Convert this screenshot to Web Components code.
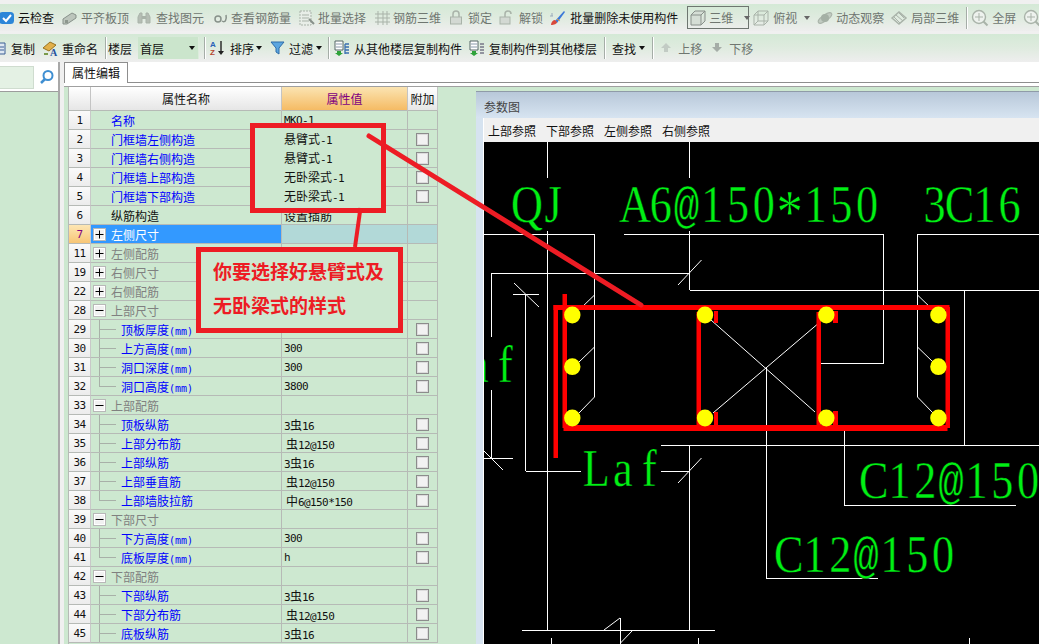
<!DOCTYPE html>
<html lang="zh"><head><meta charset="utf-8"><title>属性编辑</title>
<style>html,body{margin:0;padding:0;width:1039px;height:644px;overflow:hidden;background:#f0f0f0}</style></head>
<body>
<gl-app></gl-app>
<script>
const CJK='"Noto Sans CJK SC","Noto Sans CJK JP",sans-serif';
const mix=t=>String(t).replace(/[\u4e00-\u9fff]+/g,m=>`<span class="c">${m}</span>`);
const G='#a9b3a9',GD='#87918a';
const ICONS={
cloud:`<rect x="-1" y="2" width="15" height="12" rx="3.500" fill="#2c86d8"/><path d="M3 8l3 3 5-6" fill="none" stroke="#fff" stroke-width="2"/>`,
slab:`<path d="M1 9l9-6 4 2v3l-9 6H1z" fill="#bcc5bc" stroke="${GD}"/><path d="M3 10h3v3H3z" fill="#8d978e"/>`,
bino:`<path d="M1 13V7l2-4h2v10zM9 13V3h2l2 4v6z" fill="#b5bdb4" stroke="${G}"/><path d="M5 6h4v3H5z" fill="${G}"/>`,
rebar:`<circle cx="5" cy="9" r="3" fill="none" stroke="${GD}" stroke-width="1.5"/><path d="M9 11c3 2 5-1 4-6" fill="none" stroke="${GD}" stroke-width="1.5"/>`,
batch:`<path d="M1 1h11v14H1z" fill="#e8eee8" stroke="${G}" stroke-dasharray="2 1"/><path d="M3 5h7M3 8h7M3 11h7" stroke="${G}"/><path d="M10 9l5 5" stroke="${GD}" stroke-width="2"/>`,
grid3:`<path d="M1 4h15M1 8h15M1 12h15M4 1v14M9 1v14M13 1v14" stroke="${G}" fill="none"/>`,
lock:`<path d="M4 7V4a3 3 0 016 0v3" fill="none" stroke="${G}" stroke-width="1.5"/><rect x="1.500" y="7" width="11" height="7" fill="#d3d9d3" stroke="${G}"/>`,
unlock:`<path d="M6 7V4a3 3 0 016 0" fill="none" stroke="${G}" stroke-width="1.5"/><rect x="1" y="7" width="10" height="7" fill="#d3d9d3" stroke="${G}"/>`,
brush:`<path d="M5 11L14 1l1 1-8 11z" fill="#3b78d8"/><path d="M7 9l3 2" stroke="#e8a040"/><path d="M1 15c0-3 2-5 4-5l2 2c0 2-3 3-6 3z" fill="#d9483b"/><path d="M0 6h3M2 3v3" stroke="#9ab" />`,
cube:`<path d="M1 5h10v10H1zM1 5l4-4h10l-4 4M11 15l4-4V1" fill="#d5ded5" stroke="#88908a"/>`,
wire:`<path d="M1 5h10v10H1zM1 5l4-4h10l-4 4M11 15l4-4V1M5 1v10H15M5 11l-4 4" fill="none" stroke="${G}"/>`,
orbit:`<ellipse cx="8" cy="8" rx="8" ry="3" transform="rotate(-35 8 8)" fill="#c2ccc2" stroke="${G}"/><circle cx="8" cy="8" r="4" fill="#a4b0a5"/>`,
part:`<path d="M1 8l7-6 7 6-7 6z" fill="none" stroke="${G}" stroke-width="1.5"/><path d="M5 5l7 6M8 3l5 5M3 7l6 6" stroke="${G}"/>`,
zoom:`<circle cx="7" cy="7" r="6.500" fill="#eef2ee" stroke="${G}" stroke-width="1.4"/><path d="M7 3v8M3 7h8" stroke="${G}"/><path d="M11.500 11.500l4 4" stroke="${G}" stroke-width="2"/>`,
copy:`<path d="M-3 3h8v11h-8z" fill="#dfe8f2" stroke="#3a5f95"/><path d="M-2 7h6M-2 10h6" stroke="#3a5f95"/>`,
rename:`<path d="M1 8l7-6 6 3-7 6z" fill="#e2b04a" stroke="#96711f"/><path d="M2 13h4v2H2z" fill="#7a9a4a"/><text x="8" y="15.500" font-family="Liberation Serif" font-weight="700" font-size="10" fill="#2352a0">A</text>`,
sort:`<text x="0" y="7" font-family="Liberation Sans" font-weight="700" font-size="8" fill="#2a62b8">A</text><text x="0" y="15" font-family="Liberation Sans" font-weight="700" font-size="8" fill="#b4442f">Z</text><path d="M11 1v12" stroke="#222" stroke-width="1.4"/><path d="M8 11l3 4 3-4z" fill="#222"/>`,
funnel:`<path d="M1 2h13l-5 6v6l-3-2V8z" fill="#5ba6e0" stroke="#2e6ca8"/>`,
dup:`<path d="M1 1h8v9H1z" fill="#fff" stroke="#566"/><path d="M2 4h6M2 7h6" stroke="#89a"/><path d="M3 11h4v2h2l-4 3-4-3h2z" fill="#2fa33a"/><path d="M11 4h4M11 7h4M11 10h4M11 13h4M11 4v10" stroke="#3a6fb0" stroke-width="1.3"/>`,
dup2:`<path d="M1 1h8v9H1z" fill="#fff" stroke="#566"/><path d="M2 4h6M2 7h6" stroke="#89a"/><path d="M3 11h4v2h2l-4 3-4-3h2z" fill="#2fa33a"/><path d="M11 4h4M11 7h4M11 10h4M11 13h4" stroke="#778" stroke-width="1.3"/>`,
up:`<path d="M5 3l5 5H7v4H3V8H0z" fill="#c2cbc4"/>`,
down:`<path d="M3 3h4v4h3l-5 5-5-5h3z" fill="#a5ada7"/>`,
search:`<circle cx="8" cy="6.500" r="4.500" fill="#fff" stroke="#3f8fd2" stroke-width="2"/><path d="M5 10l-4 4" stroke="#3f8fd2" stroke-width="2.500"/>`
};

class GlTool extends HTMLElement{
 connectedCallback(){
  const a=n=>this.getAttribute(n);
  const ml=a('ml')||0,iw=a('iw')||16,ig=a('ig')||4;
  const dis=this.hasAttribute('off');
  const icon=a('icon')?`<svg width="${iw}" height="16" viewBox="0 0 ${iw} 16" overflow="visible" aria-hidden="true">${ICONS[a('icon')]}</svg>`:'';
  this.attachShadow({mode:'open'}).innerHTML=`<style>
  :host{display:flex;align-items:center;height:100%;margin-left:${ml}px;flex:none;font:12px ${CJK};color:${dis?'#6f7670':'#111'};white-space:nowrap}
  svg{flex:none;margin-right:${ig}px}
  :host([box]){border:1px solid #6e7670;height:23px;box-sizing:border-box;align-self:center}
  i{display:block;width:0;height:0;border:3px solid transparent;border-top:4px solid ${dis?'#666':'#111'};border-bottom:0;margin-left:${a('am')||5}px}
  </style>${icon}<span>${a('label')||''}</span>${this.hasAttribute('arrow')?'<i></i>':''}`;
 }
}
class GlSep extends HTMLElement{
 connectedCallback(){
  this.attachShadow({mode:'open'}).innerHTML=`<style>:host{display:block;flex:none;width:1px;height:22px;background:#a5ada7;align-self:center;margin-left:${this.getAttribute('ml')||0}px;box-shadow:1px 0 0 #fff}</style>`;
 }
}
class GlToolbar extends HTMLElement{
 connectedCallback(){
  this.attachShadow({mode:'open'}).innerHTML=`<style>:host{display:flex;align-items:center;flex:none;height:${this.getAttribute('h')}px;margin-top:${this.getAttribute('mt')}px;background:linear-gradient(#d4e9d6,#dfebdf 50%,#eeeeee);overflow:hidden}</style><slot></slot>`;
 }
}
class GlSelect extends HTMLElement{
 connectedCallback(){
  this.attachShadow({mode:'open'}).innerHTML=`<style>:host{display:flex;align-items:center;flex:none;box-sizing:border-box;width:61px;height:22px;margin-left:${this.getAttribute('ml')}px;background:#cbe5cc;border-right:1px solid #dcecdc;padding-left:2px;font:12px ${CJK};color:#111}
  span{flex:1}i{display:block;border:3px solid transparent;border-top:4px solid #111;border-bottom:0;margin-right:3px}</style><span><slot></slot></span><i></i>`;
 }
}
class GlSide extends HTMLElement{
 connectedCallback(){
  this.attachShadow({mode:'open'}).innerHTML=`<style>
  :host{display:flex;flex-direction:column;flex:none;width:60px;border-right:2px solid #a8a8a8;box-sizing:border-box;background:#fff}
  .top{display:flex;align-items:center;height:30px;box-sizing:border-box;border-bottom:1px solid #9c9c9c;padding-top:1px}
  .inp{width:34px;height:23px;box-sizing:border-box;background:#e4f1e4;border:1px solid #cfdccf;border-left:0}
  svg{margin-left:6px}.rest{flex:1;background:#cde8d0}
  </style><div class="top"><div class="inp"></div><svg width="14" height="16" viewBox="0 0 14 16" aria-hidden="true">${ICONS.search}</svg></div><div class="rest"></div>`;
 }
}
class PropRow extends HTMLElement{
 connectedCallback(){
  const a=n=>this.getAttribute(n)||'';
  const k=a('kind')||'link',tog=a('toggle'),tree=a('tree'),sel=this.hasAttribute('sel');
  const col={link:'#0000ff',black:'#111',group:'#808080'}[k];
  const val=a('value');
  const sign=tog?`<svg class="tog" width="13" height="13" viewBox="0 0 13 13" aria-hidden="true"><rect x=".5" y=".5" width="12" height="12" fill="#f1f1f1" stroke="#b8b8b8"/><rect x="1.500" y="1.500" width="10" height="10" fill="none" stroke="#fff"/><path d="M2.500 6.500h8${tog==='+'?'M6.500 2.500v8':''}" stroke="#000" fill="none"/></svg>`:'';
  this.attachShadow({mode:'open'}).innerHTML=`<style>
  :host{display:grid;grid-template-columns:22px 191px 126px 30px;height:19px;font:10px "DejaVu Sans Mono",${CJK};color:#111}
  .c{font:12px ${CJK}}
  div{box-sizing:border-box;border-right:1px solid #b6bab6;border-bottom:1px solid #b6bab6;display:flex;align-items:center;position:relative;white-space:nowrap;overflow:hidden}
  .n{justify-content:center;background:linear-gradient(#fafafa,#ececec);border-right-color:#c8c8c8;font-size:11px;letter-spacing:-.6px}
  .name{color:${sel?'#fff':col};background:${sel?'#3399ff':'transparent'};padding-left:${tree?30:20}px}
  .val{padding-left:${val[0]===' '?4:2}px;background:${sel?'#b2d9d8':'transparent'};font-size:11px;letter-spacing:-.6px}
  .val .c{letter-spacing:0}
  .ex{justify-content:center;background:${sel?'#b2d9d8':'transparent'}}
  .tog{position:absolute;left:2px;top:3px}
  .t{position:absolute;left:8px;top:0;width:1px;background:#a8b0a8;height:${tree==='end'?'10px':'19px'}}
  .h{position:absolute;left:8px;top:9px;width:17px;height:1px;background:#a8b0a8}
  .box{width:13px;height:13px;box-sizing:border-box;border:1px solid #8c8c8c;background:#f2f2f2;box-shadow:inset 0 0 0 1px #dcdcdc;display:block;flex:none}
  ${sel?'.n{background:linear-gradient(#fde6b4,#f8c676);color:#800080}':''}
  </style><div class="n">${a('n')}</div><div class="name">${tree?'<span class="t"></span><span class="h"></span>':''}${sign}<span>${mix(a('label'))}</span></div><div class="val"><span>${mix(val.trim())}</span></div><div class="ex">${this.hasAttribute('check')?'<span class="box"></span>':''}</div>`;
 }
}
class PropTable extends HTMLElement{
 connectedCallback(){
  this.attachShadow({mode:'open'}).innerHTML=`<style>
  :host{display:block;flex:none;width:369px;border-left:1px solid #b6bab6;margin-left:4px;box-sizing:content-box}
  .head{display:grid;grid-template-columns:22px 191px 126px 30px;height:24px;font:12px ${CJK};color:#111}
  .head div{display:flex;align-items:center;justify-content:center;box-sizing:border-box;border-right:1px solid #c4c4c4;border-bottom:1px solid #b6bab6;background:linear-gradient(#fff,#e6e6e6)}
  .head .v{background:linear-gradient(#fbe4b2,#f5bb64);color:#800080}
  </style><div class="head"><div></div><div>属性名称</div><div class="v">属性值</div><div>附加</div></div><slot></slot>`;
 }
}
class RefWindow extends HTMLElement{
 connectedCallback(){
  this.attachShadow({mode:'open'}).innerHTML=`<style>
  :host{display:flex;flex-direction:column;flex:none;width:563px;margin-top:4px;background:#d6e3f0;box-sizing:border-box;padding-left:0;font:12px ${CJK}}
  .title{height:27px;flex:none;box-sizing:border-box;padding:6px 0 0 8px;color:#444;background:linear-gradient(#b8c8d9,#d7e4f1);border-top:1px solid #8f9ba8;line-height:18px}
  .body{flex:1;display:flex;flex-direction:column;margin-left:7px;border-left:1px solid #fff;min-height:0}
  .menu{height:24px;flex:none;background:#f0f0f0;display:flex;align-items:center;gap:10px;padding-left:4px;color:#111}
  .cv{flex:1;min-height:0;background:#000}
  </style><div class="title">参数图</div><div class="body"><div class="menu"><span>上部参照</span><span>下部参照</span><span>左侧参照</span><span>右侧参照</span></div><div class="cv"><slot></slot></div></div>`;
 }
}
class CadDrawing extends HTMLElement{
 connectedCallback(){
  const W=[
  [547.5,142,547.5,178],[547.5,231,547.5,630],[689.5,142,689.5,178],[689.5,231,689.5,290],[689.5,290,1039,290],[689.5,445,689.5,630],
  [484,234,594.5,234],[594.5,234,594.5,397],[624,234,883.5,234],[883.5,234,883.5,363],[818,363,883.5,363],[917.5,234,1039,234],[917.5,234,917.5,397],
  [491.5,273,689.5,273],[491.5,273,491.5,337],[491.5,390,491.5,458],[484,458,513,458],[525.5,295,525.5,471],[525.5,471,580.5,471],[513,294.500,539,294.500],
  [661,471,689.500,471],[661,445.500,1039,445.500],[964.500,290,964.500,445],[766.500,367,766.500,578.500],[766.500,578.500,878,578.500],[844.500,428,844.500,505.500],[844.500,505.500,1016,505.500],
  [521.500,630.500,715,630.500],[620.500,618,620.500,644],[551.500,638,551.500,644],[698.500,638,698.500,644],[969.500,638,969.500,644]];
  const D=[[594.5,295,579,310],[594.5,347,579,362],[594.5,397,579,413],[917.5,295,933,310],[917.5,347,933,362],[917.5,397,933,413],
  [678,285,701.5,260],[484,451,503,470],[514,283,539,307],[678,483,701.5,458],[711,320,815,412],[820,322,713,413],[604,630,620,618],[633,630,620.5,643]];
  const R=[[553.5,305,396,5],[553.5,305,4.5,153],[562.5,294,4.5,134],[563.5,425,384,6],[945.5,307,4.5,121],[696.5,312,4.5,114],[816.500,312,4.5,114],[714,311,4,12],[714,412,4,15],[833,311,5,12],[833,411,5,16]];
  const C=[[572.3,315],[705,315],[826.3,315],[938.4,315],[572.3,366.7],[938.4,366.7],[572.3,418],[705,418],[826.3,418],[938.4,418]];
  const T=[['QJ',514,222,26],['A6@150*150',622,222,25.8],['3C16',922,222,25],['Laf',439,382,26.5],['Laf',583,486,26.5],['C12@150',861,498,25.7],['C12@150',776,572,25.7]];
  const SX=.85,FS=52;
  const ADV={Q:.722,J:.389,A:.722,C:.667,L:.611,a:.444,f:.333};
  const ln=a=>a.map(l=>`<line x1="${l[0]}" y1="${l[1]}" x2="${l[2]}" y2="${l[3]}"/>`).join('');
  const txt=t=>{
   const chars=[...t[0]];
   let html='',run=[],runx=[],back=0;
   const flush=()=>{if(run.length){html+=`<tspan x="${runx.join(' ')}"${back?` dy="${back}"`:''}>${run.join('')}</tspan>`;back=0;run=[];runx=[];}};
   chars.forEach((c,i)=>{
    const cell=t[1]+i*t[3];
    if(c==='@'){flush();const w=.6*50*SX;html+=`<tspan x="${((cell+(t[3]-w)/2)/SX).toFixed(1)}" font-family="Liberation Mono,monospace" font-size="50">@</tspan>`;}
    else if(c==='*'){flush();const w=.5*62*SX;html+=`<tspan x="${((cell+(t[3]-w)/2)/SX).toFixed(1)}" dy="10" font-size="62">*</tspan>`;back=-10;}
    else{const w=(ADV[c]||.5)*FS*SX;run.push(c);runx.push(((cell+(t[3]-w)/2)/SX).toFixed(1));}
   });
   flush();
   return `<text transform="scale(${SX} 1)" y="${t[2]}">${html}</text>`;
  };
  this.attachShadow({mode:'open'}).innerHTML=`<style>:host{display:block;width:555px;height:502px;overflow:hidden}svg{display:block}</style>
  <svg width="555" height="502" viewBox="484 142 555 502">
  <g stroke="#fff" stroke-width="1" shape-rendering="crispEdges">${ln(W)}</g>
  <g stroke="#fff" stroke-width="1">${ln(D)}</g>
  <g fill="#ff0000">${R.map(r=>`<rect x="${r[0]}" y="${r[1]}" width="${r[2]}" height="${r[3]}"/>`).join('')}</g>
  <g fill="#ffff00">${C.map(c=>`<ellipse cx="${c[0]}" cy="${c[1]}" rx="8.2" ry="8.4"/>`).join('')}</g>
  <g fill="#00f014" stroke="#000" stroke-width=".4" font-family="Liberation Serif,serif" font-size="52">${T.map(txt).join('')}</g>
  </svg>`;
 }
}
class NoteBox extends HTMLElement{
 connectedCallback(){
  const a=n=>this.getAttribute(n);
  this.attachShadow({mode:'open'}).innerHTML=`<style>
  :host{position:absolute;left:${a('x')}px;top:${a('y')}px;width:${a('w')}px;height:${a('h')}px;box-sizing:border-box;border:5px solid #ed1c24;background:#cde8d0;display:block}
  </style><slot></slot>`;
 }
}
class NoteLine extends HTMLElement{
 connectedCallback(){
  this.attachShadow({mode:'open'}).innerHTML=`<style>:host{position:absolute;left:0;top:0;width:1039px;height:644px;display:block;pointer-events:none}</style>
  <svg width="1039" height="644" aria-hidden="true"><g stroke="#ed1c24" fill="none"><path d="M369 136L641 305" stroke-width="5" stroke-linecap="round"/><path d="M360.500 208L355 247" stroke-width="4"/></g></svg>`;
 }
}
class NoteText extends HTMLElement{
 connectedCallback(){
  const k=this.getAttribute('kind');
  this.attachShadow({mode:'open'}).innerHTML=k==='big'
  ?`<style>:host{display:block;padding:2px 0 0 12px;font:700 19px/34px ${CJK};color:#ed1c24;white-space:nowrap}</style><slot></slot>`
  :`<style>:host{display:block;padding:1px 0 0 29px;font:11px/19px "DejaVu Sans Mono",${CJK};letter-spacing:-.6px;color:#111;white-space:nowrap}</style><slot></slot>`;
 }
}
class PropPanel extends HTMLElement{
 connectedCallback(){
  this.attachShadow({mode:'open'}).innerHTML=`<style>
  :host{display:flex;flex-direction:column;flex:1;min-width:0;background:#fff;font:12px ${CJK}}
  .strip{height:21px;flex:none;box-sizing:border-box;border-bottom:1px solid #8e8e8e;display:flex;background:#fff}
  .tab{width:64px;height:21px;box-sizing:border-box;border:1px solid #8e8e8e;border-bottom:0;background:#fff;padding-left:7px;line-height:19px;color:#111}
  .gap{height:3px;flex:none;border-bottom:1px solid #a0a0a0}
  .body{flex:1;min-height:0;display:flex;background:#cde8d0;justify-content:space-between;position:relative}
  </style><div class="strip"><div class="tab">属性编辑</div></div><div class="gap"></div><div class="body"><slot name="table"></slot><slot name="win"></slot></div>`;
 }
}
class GlApp extends HTMLElement{
 connectedCallback(){
  const rows=[
  {n:1,label:'名称',value:'MKQ-1'},
  {n:2,label:'门框墙左侧构造',check:1},{n:3,label:'门框墙右侧构造',check:1},{n:4,label:'门框墙上部构造',check:1},{n:5,label:'门框墙下部构造',check:1},
  {n:6,label:'纵筋构造',kind:'black',value:'设置插筋'},
  {n:7,label:'左侧尺寸',toggle:'+',sel:1},
  {n:11,label:'左侧配筋',toggle:'+',kind:'group'},{n:19,label:'右侧尺寸',toggle:'+',kind:'group'},{n:22,label:'右侧配筋',toggle:'+',kind:'group'},{n:28,label:'上部尺寸',toggle:'-',kind:'group'},
  {n:29,label:'顶板厚度(mm)',value:'h',check:1,tree:'mid'},{n:30,label:'上方高度(mm)',value:'300',check:1,tree:'mid'},{n:31,label:'洞口深度(mm)',value:'300',check:1,tree:'mid'},{n:32,label:'洞口高度(mm)',value:'3800',check:1,tree:'end'},
  {n:33,label:'上部配筋',toggle:'-',kind:'group'},
  {n:34,label:'顶板纵筋',value:'3虫16',check:1,tree:'mid'},{n:35,label:'上部分布筋',value:' 虫12@150',check:1,tree:'mid'},{n:36,label:'上部纵筋',value:'3虫16',check:1,tree:'mid'},{n:37,label:'上部垂直筋',value:' 虫12@150',check:1,tree:'mid'},{n:38,label:'上部墙肢拉筋',value:' 中6@150*150',check:1,tree:'end'},
  {n:39,label:'下部尺寸',toggle:'-',kind:'group'},
  {n:40,label:'下方高度(mm)',value:'300',check:1,tree:'mid'},{n:41,label:'底板厚度(mm)',value:'h',check:1,tree:'end'},
  {n:42,label:'下部配筋',toggle:'-',kind:'group'},
  {n:43,label:'下部纵筋',value:'3虫16',check:1,tree:'mid'},{n:44,label:'下部分布筋',value:' 虫12@150',check:1,tree:'mid'},{n:45,label:'底板纵筋',value:'3虫16',check:1,tree:'mid'}];
  const rowHtml=rows.map(r=>`<prop-row n="${r.n}" label="${r.label}" value="${r.value||''}" ${r.kind?`kind="${r.kind}"`:''} ${r.toggle?`toggle="${r.toggle}"`:''} ${r.tree?`tree="${r.tree}"`:''} ${r.check?'check':''} ${r.sel?'sel':''}></prop-row>`).join('');
  this.attachShadow({mode:'open'}).innerHTML=`<style>
  :host{display:flex;flex-direction:column;position:relative;width:1039px;height:644px;overflow:hidden;background:#f0f0f0}
  .main{display:flex;flex:1;min-height:0;gap:4px}
  .c{font-size:12px;font-family:${CJK};letter-spacing:0}
  .l{height:19px}
  </style>
  <gl-toolbar h="27" mt="4">
   <gl-tool icon="cloud" iw="14" ig="4" label="云检查"></gl-tool>
   <gl-tool off ml="8" icon="slab" iw="14" ig="5" label="平齐板顶"></gl-tool>
   <gl-tool off ml="8" icon="bino" iw="14" ig="5" label="查找图元"></gl-tool>
   <gl-tool off ml="9" icon="rebar" iw="14" ig="4" label="查看钢筋量"></gl-tool>
   <gl-tool off ml="8" icon="batch" iw="16" ig="3" label="批量选择"></gl-tool>
   <gl-tool off ml="8" icon="grid3" iw="16" ig="3" label="钢筋三维"></gl-tool>
   <gl-tool off ml="8" icon="lock" iw="13" ig="6" label="锁定"></gl-tool>
   <gl-tool off ml="7" icon="unlock" iw="14" ig="6" label="解锁"></gl-tool>
   <gl-tool ml="7" icon="brush" iw="16" ig="4" label="批量删除未使用构件"></gl-tool>
   <gl-tool off box ml="9" icon="cube" iw="16" ig="3" label="三维" arrow am="11" style="padding-left:2px;width:62px"></gl-tool>
   <gl-tool off ml="4" icon="wire" iw="16" ig="4" label="俯视" arrow am="7"></gl-tool>
   <gl-tool off ml="7" icon="orbit" iw="16" ig="3" label="动态观察"></gl-tool>
   <gl-tool off ml="7" icon="part" iw="16" ig="4" label="局部三维"></gl-tool>
   <gl-sep ml="7"></gl-sep>
   <gl-tool off ml="5" icon="zoom" iw="16" ig="4" label="全屏"></gl-tool>
   <gl-tool off ml="8" icon="zoom" iw="16" ig="0"></gl-tool>
  </gl-toolbar>
  <gl-toolbar h="28" mt="3">
   <gl-tool icon="copy" iw="5" ig="6" label="复制"></gl-tool>
   <gl-tool ml="7" icon="rename" iw="16" ig="4" label="重命名"></gl-tool>
   <gl-sep ml="7"></gl-sep>
   <gl-tool ml="2" label="楼层"></gl-tool>
   <gl-select ml="6">首层</gl-select>
   <gl-sep ml="5"></gl-sep>
   <gl-tool ml="5" icon="sort" iw="16" ig="4" label="排序" arrow am="2"></gl-tool>
   <gl-tool ml="8" icon="funnel" iw="14" ig="5" label="过滤" arrow am="3"></gl-tool>
   <gl-sep ml="6"></gl-sep>
   <gl-tool ml="5" icon="dup" iw="16" ig="4" label="从其他楼层复制构件"></gl-tool>
   <gl-tool ml="7" icon="dup2" iw="16" ig="4" label="复制构件到其他楼层"></gl-tool>
   <gl-sep ml="7"></gl-sep>
   <gl-tool ml="7" label="查找" arrow am="3"></gl-tool>
   <gl-sep ml="7"></gl-sep>
   <gl-tool off ml="8" icon="up" iw="10" ig="7" label="上移"></gl-tool>
   <gl-tool off ml="10" icon="down" iw="10" ig="7" label="下移"></gl-tool>
  </gl-toolbar>
  <div class="main">
   <gl-side></gl-side>
   <prop-panel>
    <prop-table slot="table">${rowHtml}</prop-table>
    <ref-window slot="win"><cad-drawing></cad-drawing></ref-window>
   </prop-panel>
  </div>
  <note-box x="250" y="123" w="136" h="90"><note-text>
   <div class="l">${mix('悬臂式-1')}</div><div class="l">${mix('悬臂式-1')}</div><div class="l">${mix('无卧梁式-1')}</div><div class="l">${mix('无卧梁式-1')}</div>
  </note-text></note-box>
  <note-box x="196" y="247" w="207" h="86"><note-text kind="big"><div>你要选择好悬臂式及</div><div>无卧梁式的样式</div></note-text></note-box>
  <note-line></note-line>`;
 }
}
const defs={'gl-tool':GlTool,'gl-sep':GlSep,'gl-toolbar':GlToolbar,'gl-select':GlSelect,'gl-side':GlSide,'prop-row':PropRow,'prop-table':PropTable,'ref-window':RefWindow,'cad-drawing':CadDrawing,'note-box':NoteBox,'note-line':NoteLine,'note-text':NoteText,'prop-panel':PropPanel,'gl-app':GlApp};
for(const k in defs)customElements.define(k,defs[k]);
</script>
</body></html>
